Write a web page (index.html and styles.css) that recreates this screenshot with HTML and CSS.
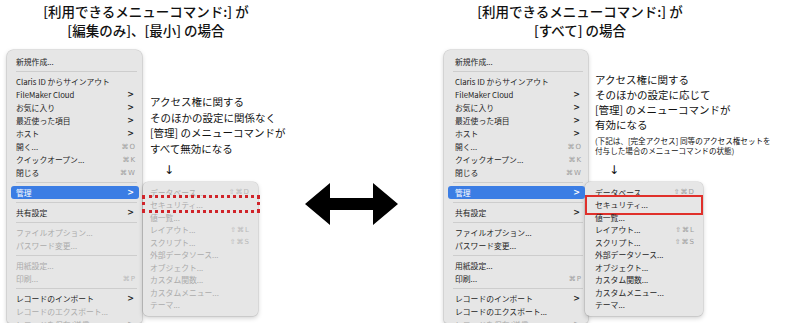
FILE: index.html
```html
<!DOCTYPE html>
<html lang="ja">
<head>
    <meta charset="utf-8" />
    <title>管理メニューの比較</title>
    <link rel="stylesheet" href="styles.css">
</head>
<body>
<div class="page">

    <section class="panel panel-left">
        <h2 class="title">[利用できるメニューコマンド:] が<br>[編集のみ]、[最小] の場合</h2>
        <div class="stage">
            <div class="menu">
                <div class="item"><span class="label">新規作成...</span></div>
                <div class="sep"></div>
                <div class="item"><span class="label">Claris ID からサインアウト</span></div>
                <div class="item"><span class="label">FileMaker Cloud</span><span class="chev">&gt;</span></div>
                <div class="item"><span class="label">お気に入り</span><span class="chev">&gt;</span></div>
                <div class="item"><span class="label">最近使った項目</span><span class="chev">&gt;</span></div>
                <div class="item"><span class="label">ホスト</span><span class="chev">&gt;</span></div>
                <div class="item"><span class="label">開く...</span><span class="key">⌘O</span></div>
                <div class="item"><span class="label">クイックオープン...</span><span class="key">⌘K</span></div>
                <div class="item"><span class="label">閉じる</span><span class="key">⌘W</span></div>
                <div class="sep"></div>
                <div class="item on"><span class="label">管理</span><span class="chev">&gt;</span></div>
                <div class="sep"></div>
                <div class="item"><span class="label">共有設定</span><span class="chev">&gt;</span></div>
                <div class="sep"></div>
                <div class="item off"><span class="label">ファイルオプション...</span></div>
                <div class="item off"><span class="label">パスワード変更...</span></div>
                <div class="sep"></div>
                <div class="item off"><span class="label">用紙設定...</span></div>
                <div class="item off"><span class="label">印刷...</span><span class="key">⌘P</span></div>
                <div class="sep"></div>
                <div class="item"><span class="label">レコードのインポート</span><span class="chev">&gt;</span></div>
                <div class="item off"><span class="label">レコードのエクスポート...</span></div>
                <div class="item off"><span class="label">レコードを保存/送信</span><span class="chev">&gt;</span></div>
            </div>
            <div class="side">
                <div class="lead">
                    <p class="note">アクセス権に関する<br>そのほかの設定に関係なく<br>[管理] のメニューコマンドが<br>すべて無効になる</p>
                    <div class="down">↓</div>
                </div>
                <div class="submenu">
                    <div class="item off"><span class="label">データベース...</span><span class="key">⇧⌘D</span></div>
                    <div class="item off dotted"><span class="label">セキュリティ...</span></div>
                    <div class="item off"><span class="label">値一覧...</span></div>
                    <div class="item off"><span class="label">レイアウト...</span><span class="key">⇧⌘L</span></div>
                    <div class="item off"><span class="label">スクリプト...</span><span class="key">⇧⌘S</span></div>
                    <div class="item off"><span class="label">外部データソース...</span></div>
                    <div class="item off"><span class="label">オブジェクト...</span></div>
                    <div class="item off"><span class="label">カスタム関数...</span></div>
                    <div class="item off"><span class="label">カスタムメニュー...</span></div>
                    <div class="item off"><span class="label">テーマ...</span></div>
                </div>
            </div>
        </div>
    </section>

    <div class="swap">
        <svg width="93" height="42" viewBox="0 0 93 42">
            <polygon points="0,21 25,0 25,15 68,15 68,0 93,21 68,42 68,27 25,27 25,42" fill="#000"/>
        </svg>
    </div>

    <section class="panel panel-right">
        <h2 class="title">[利用できるメニューコマンド:] が<br>[すべて] の場合</h2>
        <div class="stage">
            <div class="menu">
                <div class="item"><span class="label">新規作成...</span></div>
                <div class="sep"></div>
                <div class="item"><span class="label">Claris ID からサインアウト</span></div>
                <div class="item"><span class="label">FileMaker Cloud</span><span class="chev">&gt;</span></div>
                <div class="item"><span class="label">お気に入り</span><span class="chev">&gt;</span></div>
                <div class="item"><span class="label">最近使った項目</span><span class="chev">&gt;</span></div>
                <div class="item"><span class="label">ホスト</span><span class="chev">&gt;</span></div>
                <div class="item"><span class="label">開く...</span><span class="key">⌘O</span></div>
                <div class="item"><span class="label">クイックオープン...</span><span class="key">⌘K</span></div>
                <div class="item"><span class="label">閉じる</span><span class="key">⌘W</span></div>
                <div class="sep"></div>
                <div class="item on"><span class="label">管理</span><span class="chev">&gt;</span></div>
                <div class="sep"></div>
                <div class="item"><span class="label">共有設定</span><span class="chev">&gt;</span></div>
                <div class="sep"></div>
                <div class="item"><span class="label">ファイルオプション...</span></div>
                <div class="item"><span class="label">パスワード変更...</span></div>
                <div class="sep"></div>
                <div class="item"><span class="label">用紙設定...</span></div>
                <div class="item"><span class="label">印刷...</span><span class="key">⌘P</span></div>
                <div class="sep"></div>
                <div class="item"><span class="label">レコードのインポート</span><span class="chev">&gt;</span></div>
                <div class="item"><span class="label">レコードのエクスポート...</span></div>
                <div class="item off"><span class="label">レコードを保存/送信</span><span class="chev">&gt;</span></div>
            </div>
            <div class="side">
                <div class="lead">
                    <p class="note">アクセス権に関する<br>そのほかの設定に応じて<br>[管理] のメニューコマンドが<br>有効になる</p>
                    <p class="small">(下記は、[完全アクセス] 同等のアクセス権セットを<br>付与した場合のメニューコマンドの状態)</p>
                    <div class="down">↓</div>
                </div>
                <div class="submenu">
                    <div class="item"><span class="label">データベース...</span><span class="key">⇧⌘D</span></div>
                    <div class="item boxed"><span class="label">セキュリティ...</span></div>
                    <div class="item"><span class="label">値一覧...</span></div>
                    <div class="item"><span class="label">レイアウト...</span><span class="key">⇧⌘L</span></div>
                    <div class="item"><span class="label">スクリプト...</span><span class="key">⇧⌘S</span></div>
                    <div class="item"><span class="label">外部データソース...</span></div>
                    <div class="item"><span class="label">オブジェクト...</span></div>
                    <div class="item"><span class="label">カスタム関数...</span></div>
                    <div class="item"><span class="label">カスタムメニュー...</span></div>
                    <div class="item"><span class="label">テーマ...</span></div>
                </div>
            </div>
        </div>
    </section>

</div>
</body>
</html>
```

FILE: styles.css
```css
body {
    margin: 0;
    background-color: #fff;
    color: #111;
    font-family: "Noto Sans CJK JP", "Noto Sans", sans-serif;
}

.page {
    display: flex;
}

.panel-left {
    width: 300px;
}

.swap {
    width: 143px;
}

.swap svg {
    display: block;
    margin: 183px 0 0 5px;
}

.title {
    margin: 0;
    padding-top: 2px;
    font-size: 13.5px;
    line-height: 19px;
    font-weight: 500;
    text-align: center;
}

.panel-left .title {
    width: 292px;
}

.panel-right .title {
    width: 274px;
}

.stage {
    display: flex;
    margin-top: 10px;
}

.panel-left .stage {
    padding-left: 7px;
}

.panel-right .stage {
    padding-left: 1px;
}

/* main menu */
.menu {
    width: 135px;
    height: 273px;
    box-sizing: border-box;
    overflow: hidden;
    padding: 5px 3px 0 4px;
    background-color: #e6e6e6;
    border-radius: 6px 6px 3px 3px;
    box-shadow: 0 0 0 0.5px rgba(0, 0, 0, 0.18), 0 2px 5px rgba(0, 0, 0, 0.22);
    font-size: 7.8px;
    color: #1e1e1e;
}

.panel-right .menu {
    width: 144px;
}

.item {
    position: relative;
    display: flex;
    align-items: center;
    height: 13px;
    padding: 0 3px 0 5px;
    border-radius: 3px;
    white-space: nowrap;
}

.panel-right .menu .item {
    padding-left: 7px;
}

.item .label {
    flex: 1;
}

.key {
    color: #9c9c9c;
    font-family: "DejaVu Sans", sans-serif;
    font-size: 7px;
    letter-spacing: 1px;
}

.chev {
    font-family: "DejaVu Sans", sans-serif;
    font-weight: bold;
    font-size: 8px;
    padding-right: 2px;
}

.sep {
    height: 1px;
    margin: 3px 2px 3px 5px;
    background-color: #cdcdcd;
}

.item.on {
    background-color: #3b7de4;
    color: #fff;
}

.item.on .chev {
    color: #fff;
}

.item.off {
    color: #ababab;
}

.item.off .key {
    color: #b9b9b9;
}

/* right column: note + submenu */
.side {
    display: flex;
    flex-direction: column;
}

.lead {
    height: 132px;
    display: flex;
    flex-direction: column;
    justify-content: flex-end;
    padding-left: 8px;
}

.panel-right .lead {
    padding-left: 7px;
}

.note {
    margin: 0;
    font-size: 10.5px;
    line-height: 15.5px;
    color: #111;
}

.panel-right .note {
    line-height: 15px;
}

.small {
    margin: 4px 0 0;
    font-size: 7.6px;
    line-height: 10px;
    color: #111;
    white-space: nowrap;
}

.down {
    margin: 6px 0 4px 14px;
    font-family: "DejaVu Sans", sans-serif;
    font-size: 12px;
    line-height: 16px;
    color: #111;
}

.submenu {
    width: 115px;
    box-sizing: border-box;
    margin-left: 1px;
    padding: 4px 3px 5px 3px;
    background-color: #e6e6e6;
    border-radius: 5px;
    box-shadow: 0 0 0 0.5px rgba(0, 0, 0, 0.15), 0 2px 5px rgba(0, 0, 0, 0.2);
    font-size: 7.8px;
    color: #1e1e1e;
}

.panel-right .submenu {
    width: 118px;
    margin-left: -3px;
}

.submenu .item {
    height: 12.5px;
    padding: 0 5px 0 4px;
}

.panel-right .submenu .item {
    padding-left: 7px;
}

.item.dotted::after {
    content: "";
    position: absolute;
    top: -4px;
    bottom: -2px;
    left: -4px;
    right: -5px;
    border: 3px dotted #d0242a;
}

.item.boxed::after {
    content: "";
    position: absolute;
    top: -4px;
    bottom: -4px;
    left: -3px;
    right: -3px;
    border: 2px solid #e0302b;
}
```
